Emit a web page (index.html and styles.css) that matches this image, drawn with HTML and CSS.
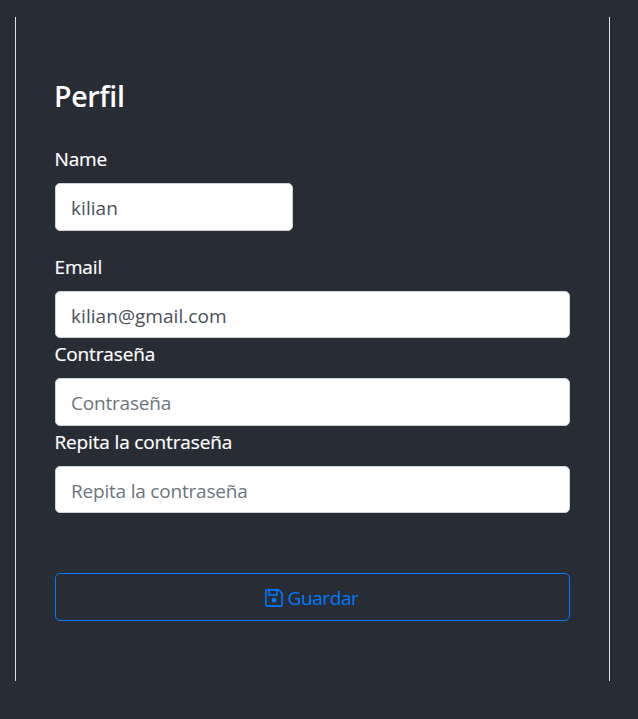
FILE: index.html
```html
<!DOCTYPE html>
<html lang="es">
<head>
<meta charset="utf-8">
<title>Perfil</title>
<link rel="stylesheet" href="styles.css">
</head>
<body>
<main class="panel">
  <h1 class="title">Perfil</h1>
  <form class="form">
    <div class="field field-name">
      <label for="name">Name</label>
      <input id="name" type="text" value="kilian">
    </div>
    <div class="field field-email">
      <label for="email">Email</label>
      <input id="email" type="email" value="kilian@gmail.com">
    </div>
    <div class="field field-password">
      <label for="password">Contraseña</label>
      <input id="password" type="password" placeholder="Contraseña">
    </div>
    <div class="field field-repeat">
      <label for="repeat">Repita la contraseña</label>
      <input id="repeat" type="password" placeholder="Repita la contraseña">
    </div>
    <button class="save" type="button">
      <svg class="icon" viewBox="0 0 18 18" fill="none" stroke="currentColor" stroke-width="1.6" stroke-linejoin="round" aria-hidden="true">
        <path d="M2.3.9H13.6L17.1 4.4v11.3q0 1.4-1.4 1.4H2.3Q.9 17.1.9 15.7V2.3Q.9.9 2.3.9Z"/>
        <path d="M4 1v5h8V1"/>
        <circle cx="9" cy="11.2" r="2.4" fill="currentColor" stroke="none"/>
      </svg>
      <span class="save-text">Guardar</span>
    </button>
  </form>
</main>
</body>
</html>
```
FILE: styles.css
```css
* { box-sizing: border-box; }

body {
  margin: 0;
  padding: 17px 28px 38px 15px;
  background: #282c34;
  color: #fff;
  font-family: "Segoe UI", "Open Sans", "Noto Sans", sans-serif;
  font-size: 19px;
  line-height: 30px;
}

.panel {
  height: 664px;
  padding: 60px 39px 0;
  border: solid #dee2e6;
  border-width: 0 1px;
}

.title {
  margin: 0 0 28px -1px;
  font-size: 28.5px;
  font-weight: 600;
  line-height: 38px;
  letter-spacing: -0.3px;
}

.form { display: flex; flex-direction: column; }

.field { display: flex; flex-direction: column; }

.field label {
  height: 40px;
  margin-left: -0.5px;
  padding-top: 1px;
  font-weight: 500;
  letter-spacing: -0.15px;
  -webkit-text-stroke: 0.2px currentColor;
}

.field input {
  width: 100%;
  height: 47px;
  padding: 2px 15px 0;
  border: 1px solid #ced4da;
  border-radius: 5px;
  background: #fff;
  color: #495057;
  font: inherit;
  letter-spacing: 0.05px;
}

.field input::placeholder {
  color: #6c757d;
  opacity: 1;
  letter-spacing: -0.2px;
}

.field-name { margin-bottom: 20px; }
.field-name input { width: 238px; height: 48px; }
.field-password input { height: 48px; }

.save {
  display: flex;
  align-items: center;
  justify-content: center;
  gap: 5px;
  height: 48px;
  margin-top: 60px;
  padding: 0 2px 0 0;
  border: 1px solid #007bff;
  border-radius: 5px;
  background: transparent;
  color: #007bff;
  font: inherit;
}

.save-text { padding-top: 2px; letter-spacing: -0.4px; }

.icon { width: 18px; height: 18px; margin-top: 1px; }
```
